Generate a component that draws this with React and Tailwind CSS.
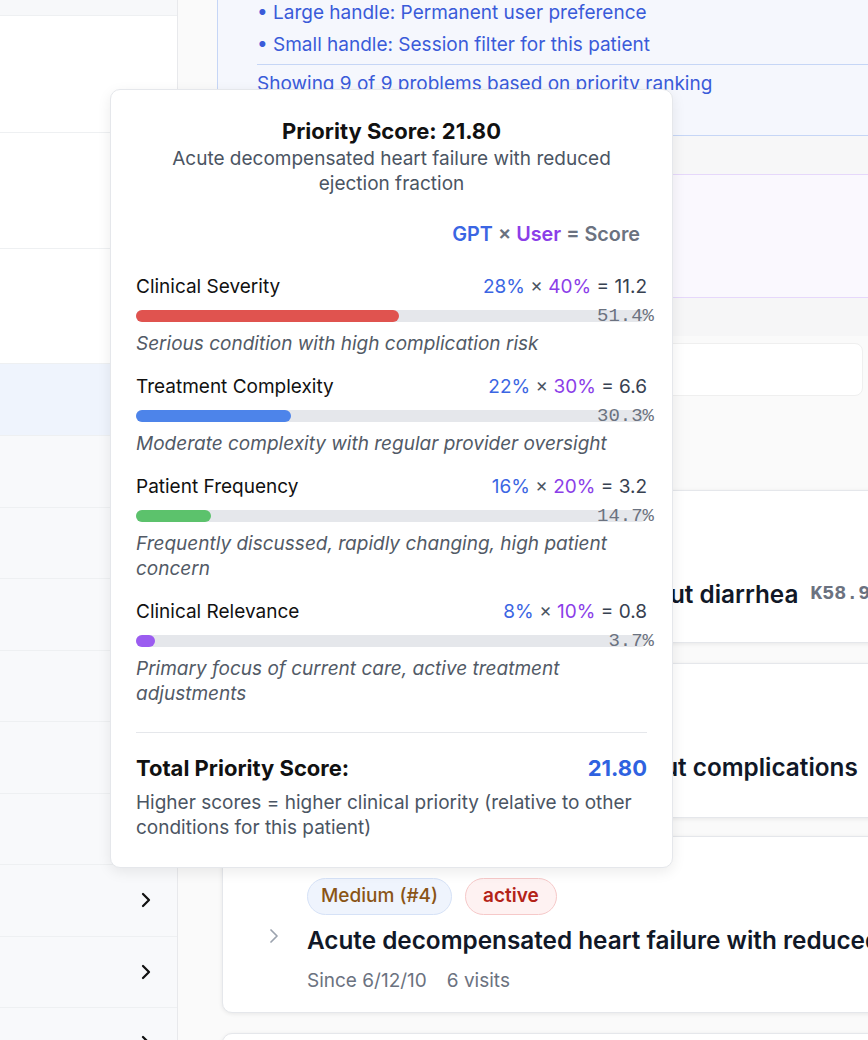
import React from "react";
import { ChevronRight } from "lucide-react";

const factors = [
  {
    name: "Clinical Severity",
    gpt: "28%",
    user: "40%",
    score: "11.2",
    pct: 51.4,
    color: "bg-[#e0534f]",
    desc: "Serious condition with high complication risk",
  },
  {
    name: "Treatment Complexity",
    gpt: "22%",
    user: "30%",
    score: "6.6",
    pct: 30.3,
    color: "bg-[#4d84ea]",
    desc: "Moderate complexity with regular provider oversight",
  },
  {
    name: "Patient Frequency",
    gpt: "16%",
    user: "20%",
    score: "3.2",
    pct: 14.7,
    color: "bg-[#5cc26c]",
    desc: "Frequently discussed, rapidly changing, high patient concern",
  },
  {
    name: "Clinical Relevance",
    gpt: "8%",
    user: "10%",
    score: "0.8",
    pct: 3.7,
    color: "bg-[#9b5cf0]",
    desc: "Primary focus of current care, active treatment adjustments",
  },
];

function SideRow({ h, bg, chevron }) {
  return (
    <div
      className={`${h} ${bg} border-b border-[#eef0f2] flex items-center justify-end pr-[19px] shrink-0`}
    >
      {chevron && <ChevronRight size={24} strokeWidth={2.25} className="text-[#111111]" />}
    </div>
  );
}

function Card({ mt, badges, title, code, meta, pb }) {
  return (
    <div
      className={`${mt} ml-[5px] w-[760px] shrink-0 bg-white border border-[#e5e7eb] rounded-[10px] shadow-[0_1px_4px_rgba(0,0,0,0.08)] flex pl-[39px] pt-[41px] ${pb}`}
    >
      <div className="w-[24px] shrink-0 pt-[46px]">
        <ChevronRight size={24} strokeWidth={1.75} className="text-[#9ca3af]" />
      </div>
      <div className="ml-[21px] flex flex-col min-w-0">
        <div className="flex gap-[13px] h-[37px]">
          {badges && (
            <>
              <span className="h-[37px] px-[13px] rounded-full border border-[#d6e2f7] bg-[#eff4fd] text-[#8a5416] font-medium text-[19px] flex items-center">
                Medium (#4)
              </span>
              <span className="h-[37px] px-[17px] rounded-full border border-[#f6c9c9] bg-[#fef2f2] text-[#b42318] font-semibold text-[19px] flex items-center">
                active
              </span>
            </>
          )}
        </div>
        <div className="mt-[9px] flex items-center whitespace-nowrap h-[32px]">
          <span className="text-[24.3px] leading-[32px] font-semibold text-[#111827]">{title}</span>
          {code && (
            <span className="ml-[12px] font-['Liberation_Mono',monospace] font-bold text-[20px] text-[#6b7280]">
              {code}
            </span>
          )}
        </div>
        {meta && (
          <div className="mt-[11.5px] flex gap-[20px] text-[19px] leading-[25px] text-[#6b7280] whitespace-nowrap">
            <span>Since 6/12/10</span>
            <span>6 visits</span>
          </div>
        )}
      </div>
    </div>
  );
}

export default function App() {
  return (
    <div className="relative w-[868px] h-[1040px] overflow-hidden flex bg-[#fafafa] font-['Inter','Noto_Sans',sans-serif]">
      {/* Sidebar */}
      <div className="w-[178px] shrink-0 border-r border-[#e8e9ec] bg-white flex flex-col">
        <SideRow h="h-[16px]" bg="bg-[#f7f8fa]" />
        <SideRow h="h-[117px]" bg="bg-white" />
        <SideRow h="h-[116px]" bg="bg-white" />
        <SideRow h="h-[115px]" bg="bg-white" />
        <SideRow h="h-[72px]" bg="bg-[#eff4fd]" />
        {Array.from({ length: 9 }).map((_, i) => (
          <SideRow key={i} h="h-[71.5px]" bg="bg-[#f8f9fb]" chevron />
        ))}
      </div>

      {/* Main */}
      <div className="flex-1 min-w-0 overflow-hidden flex flex-col pl-[39px]">
        <div className="w-[700px] shrink-0 h-[136px] bg-[#f5f7fd] border-l border-b border-[#c6d6f6] pl-[39px] text-[#3a5bd9] text-[19px] leading-[25px]">
          <div>• Large handle: Permanent user preference</div>
          <div className="mt-[7px]">• Small handle: Session filter for this patient</div>
          <div className="mt-[7px] border-t border-[#c6d6f6] pt-[6px]">
            Showing 9 of 9 problems based on priority ranking
          </div>
        </div>
        <div className="w-[700px] shrink-0 h-[38px] bg-[#f7f7f8]" />
        <div className="w-[700px] shrink-0 h-[124px] bg-[#faf8fe] border-y border-l border-[#e6d8fb]" />
        <div className="w-[700px] shrink-0 h-[38px] bg-[#f6f6f7]" />
        <div className="mt-[7px] ml-[5px] w-[641px] h-[53px] shrink-0 bg-white border border-[#efefef] rounded-lg" />

        <Card
          mt="mt-[94px]"
          title="Irritable bowel syndrome without diarrhea"
          code="K58.9"
          pb="pb-[32px]"
        />
        <Card
          mt="mt-[20px]"
          title="Type 2 diabetes mellitus without complications"
          code="E11.9"
          pb="pb-[34px]"
        />
        <Card
          mt="mt-[18px]"
          badges
          title="Acute decompensated heart failure with reduced ejection fraction"
          code="I50.21"
          meta
          pb="pb-[19.5px]"
        />
        <Card mt="mt-[20px]" title="Essential hypertension" pb="pb-[32px]" />
      </div>

      {/* Tooltip */}
      <div className="absolute left-[110px] top-[89px] w-[563px] bg-white border border-[#e5e7eb] rounded-[10px] shadow-[0_4px_14px_rgba(0,0,0,0.08)] px-[25px] pt-[26px] pb-[27px]">
        <div className="text-center text-[22px] leading-[30px] font-bold text-[#111111]">
          Priority Score: 21.80
        </div>
        <div className="text-center text-[19px] leading-[25px] text-[#4b5563] px-[20px]">
          Acute decompensated heart failure with reduced ejection fraction
        </div>
        <div className="mt-[26px] text-right pr-[7px] text-[19.8px] leading-[25px] font-semibold text-[#6b7280]">
          <span className="text-[#3b66e3]">GPT</span> × <span className="text-[#8b3ee8]">User</span> = Score
        </div>

        <div className="mt-[27px] flex flex-col gap-[18px]">
          {factors.map((f) => (
            <div key={f.name} className="flex flex-col">
              <div className="flex justify-between items-center text-[19px] leading-[25px]">
                <span className="text-[#111111]">{f.name}</span>
                <span className="text-[#374151]">
                  <span className="text-[#3b66e3]">{f.gpt}</span>
                  <span className="text-[#4b5563]"> × </span>
                  <span className="text-[#8b3ee8]">{f.user}</span>
                  <span> = {f.score}</span>
                </span>
              </div>
              <div className="relative mt-[10.5px] h-[12.5px] rounded-full bg-[#e5e7eb]">
                <div
                  className={`h-full rounded-full ${f.color}`}
                  style={{ width: `${f.pct}%` }}
                />
                <span className="absolute right-[-7px] top-1/2 -translate-y-1/2 font-['Liberation_Mono',monospace] text-[19px] leading-none text-[#6b7280]">
                  {f.pct.toFixed(1)}%
                </span>
              </div>
              <div className="mt-[9px] italic text-[19px] leading-[25px] text-[#525a66]">{f.desc}</div>
            </div>
          ))}
        </div>

        <div className="mt-[25.5px] border-t border-[#e5e7eb] pt-[20px]">
          <div className="flex justify-between items-center text-[22px] leading-[30px] font-bold">
            <span className="text-[#111111]">Total Priority Score:</span>
            <span className="text-[#2f62e0]">21.80</span>
          </div>
          <div className="mt-[7.5px] text-[19px] leading-[25px] text-[#4b5563]">
            Higher scores = higher clinical priority (relative to other conditions for this patient)
          </div>
        </div>
      </div>
    </div>
  );
}
